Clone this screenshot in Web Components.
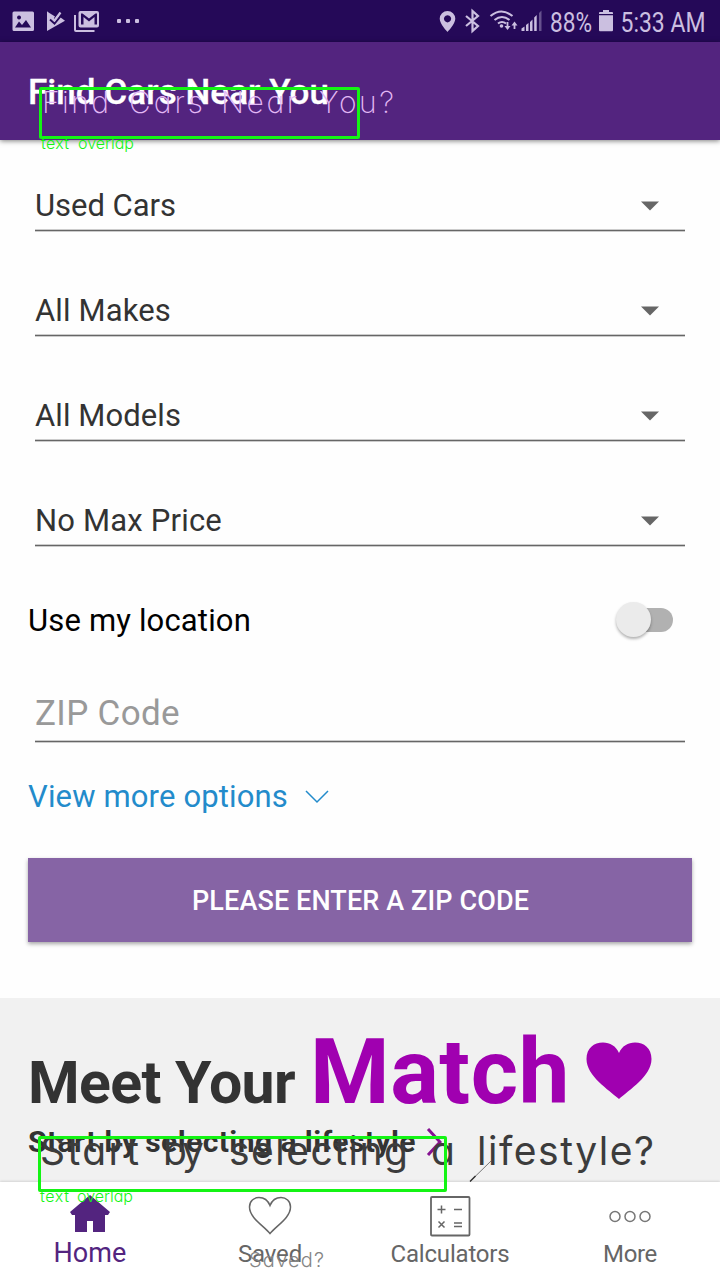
<!DOCTYPE html>
<html lang="en">
<head>
<meta charset="utf-8">
<title>Find Cars Near You</title>
<style>
html,body{margin:0;background:#fefefe}
body{font-family:Roboto,"Liberation Sans",sans-serif;width:720px;height:1280px;overflow:hidden}
</style>
</head>
<body>
<car-app></car-app>
<script>
const define = (name, html, init) => customElements.define(name, class extends HTMLElement {
  connectedCallback() {
    if (this.shadowRoot) return;
    const t = document.createElement('template');
    t.innerHTML = html;
    this.attachShadow({mode: 'open'}).append(t.content.cloneNode(true));
    if (init) init.call(this, this.shadowRoot);
  }
});

// Line of text whose tracking is adjusted to occupy a given width.
define('fit-text', `<style>:host{display:inline-block;white-space:pre;line-height:1.2}span{display:inline-block}</style><span><slot></slot></span>`, function (root) {
  const s = root.querySelector('span'), w = +this.getAttribute('w');
  const fit = () => {
    s.style.letterSpacing = '0px';
    const count = root.querySelector('slot').assignedNodes({flatten: true}).reduce((n, node) => n + node.textContent.length, 0);
    const natural = s.getBoundingClientRect().width;
    if (w && count && natural) s.style.letterSpacing = ((w - natural) / count) + 'px';
  };
  fit();
  root.querySelector('slot').addEventListener('slotchange', fit);
});

define('status-bar', `<style>
:host{display:flex;height:42px;background:#250958;color:#cbbfe0;align-items:center;justify-content:space-between}
svg{display:block}.right{display:flex;align-items:center;height:42px}
text{font-family:Roboto,sans-serif;font-size:27px}
</style>
<svg width="160" height="42" fill="#cbbfe0">
<path fill-rule="evenodd" d="M14 11.500h18.500q1.500 0 1.500 1.500v16.500q0 1.500-1.500 1.500H14q-1.500 0-1.500-1.500V13q0-1.500 1.500-1.500zM15 27.500h16l-5-7.500-4 5-3-3.500zM19 15.500a2 2 0 1 0 .1 0z"/>
<path d="M47 11.500V31L65 20.800 58 15.500z"/><path d="M47 11.500L54.500 19.500 60 11.500z" fill="#250958"/><path d="M47 11.500l8 5-2 3-6-3z"/>
<path d="M50 19.500l4.500 4L63 13" fill="none" stroke="#250958" stroke-width="2"/>
<path d="M51.500 17.500l3 3L60.500 12.500" fill="none" stroke="#cbbfe0" stroke-width="2.200"/>
<path d="M74 15h2v15h18.500v2H76q-2 0-2-2z"/>
<path fill-rule="evenodd" d="M80.500 11h16.500q2 0 2 2v12.500q0 2-2 2H80.500q-2 0-2-2V13q0-2 2-2zM81 13.500v11h2.500v-7.500l5.500 4.500 5.500-4.500v7.500H97v-11h-1.500L89 18.500l-6.500-5z"/>
<rect x="117" y="19" width="4" height="4" rx="1"/><rect x="126" y="19" width="4" height="4" rx="1"/><rect x="135" y="19" width="4" height="4" rx="1"/>
</svg>
<div class="right">
<svg width="282" height="42" viewBox="438 0 282 42" fill="#cbbfe0">
<path fill-rule="evenodd" d="M447.500 11a7.800 7.800 0 0 1 7.800 7.800C455.300 24 447.500 32 447.500 32S439.700 24 439.700 18.800A7.800 7.800 0 0 1 447.500 11zM447.500 15.200a3.600 3.600 0 1 0 .1 0z"/>
<path d="M466 16l12 10-5.500 5V11l5.500 5-12 10" fill="none" stroke="#cbbfe0" stroke-width="2.200"/>
<path d="M490.500 16q11-9 22 0M494.500 20q7.500-6 15 0M498 23.500q4-3 8 0" fill="none" stroke="#cbbfe0" stroke-width="2.100"/>
<circle cx="501.500" cy="26" r="1.800"/>
<path d="M507.500 22v5M514.500 29v-5" stroke="#cbbfe0" stroke-width="1.800"/><path d="M504.500 26h6l-3 4zM511.500 25.500h6l-3-4z"/>
<path d="M521.500 31v-2.500l3-2V31zM526 31v-6l2.500-2V31zM530 31v-9l2.500-2.500V31zM534.200 31V17.500l2.500-2.500v16z"/><path d="M539 31V13l2.500-2.500V31z" opacity=".4"/>
<text x="550" y="31.500" textLength="42" lengthAdjust="spacingAndGlyphs">88%</text>
<path d="M603 10h6v2H612q1 0 1 1v1H599v-1q0-1 1-1h3zM599 15.300h14V30q0 1.200-1 1.200H600q-1 0-1-1.200z"/>
<text x="620.500" y="31.500" textLength="85" lengthAdjust="spacingAndGlyphs">5:33 AM</text>
</svg>
</div>`);

define('title-bar', `<style>
:host{display:flex;height:98px;background:#53247f;color:#fff;box-shadow:0 1px 5px rgba(0,0,0,.5);align-items:center;padding:4px 0 0 28px;box-sizing:border-box;font-size:35px;font-weight:500;-webkit-text-stroke:.3px}
</style><fit-text w="301"><slot></slot></fit-text>`);

define('select-row', `<style>
:host{display:flex;height:105px;margin:0 35px;box-sizing:border-box;border-bottom:1px solid #666;box-shadow:0 1px #ccc,inset 0 -1px #ccc;color:#333;font-size:31px;justify-content:space-between;align-items:flex-end;padding:0 26px 6px 0}
svg{margin-bottom:13px}
</style><fit-text></fit-text><svg width="18" height="10"><path d="M0 .5h18L9 9.500z" fill="#666"/></svg>`, function (root) {
  const f = document.createElement('fit-text');
  f.setAttribute('w', this.getAttribute('w'));
  f.textContent = this.getAttribute('label');
  root.querySelector('fit-text').replaceWith(f);
});

define('toggle-row', `<style>
:host{display:flex;height:148px;box-sizing:border-box;padding:0 47px 0 28px;align-items:center;justify-content:space-between;font-size:31px;color:#000}
.track{width:46px;height:24px;border-radius:12px;background:#b1b1b1;display:flex;align-items:center}
.knob{width:35px;height:35px;border-radius:50%;background:#ebebeb;box-shadow:0 2px 3px rgba(0,0,0,.3);flex:none;margin:-1px 0 0 -11px}
fit-text{padding-top:2px}
</style><fit-text w="223"><slot></slot></fit-text><div class="track"><div class="knob"></div></div>`);

define('zip-field', `<style>
:host{display:flex;height:48px;margin:0 35px;border-bottom:1px solid #666;box-shadow:0 1px #ccc,inset 0 -1px #ccc;box-sizing:border-box;color:#999;font-size:35px;align-items:flex-start}
fit-text{margin-top:-1px}
</style><fit-text w="145"><slot></slot></fit-text>`);

define('more-link', `<style>
:host{display:flex;height:116px;box-sizing:border-box;padding:0 28px 6px;align-items:center;color:#238bcb;font-size:31px;gap:17px}
svg{margin-bottom:1px}
</style><fit-text w="260"><slot></slot></fit-text><svg width="24" height="14"><path d="M1 1l11 11L23 1" fill="none" stroke="#238bcb" stroke-width="1.500"/></svg>`);

define('cta-button', `<style>
:host{display:flex;height:84px;box-sizing:border-box;padding:2px 0 0 1px;margin:0 28px 56px;background:#8664a5;color:#fff;align-items:center;justify-content:center;font-size:27px;font-weight:500;box-shadow:0 2px 4px rgba(0,0,0,.35)}
</style><fit-text w="337"><slot></slot></fit-text>`);

define('match-promo', `<style>
:host{display:block;height:184px;background:#f1f1f1;color:#333;font-weight:700;overflow:hidden}
.line{display:flex;align-items:baseline;padding:20px 0 0 28px;font-size:59px;height:106px}
.big{font-size:91px;color:#a000b0;margin-left:15px}
.line svg{margin-left:16px;align-self:flex-start;margin-top:24px}
.sub{display:flex;align-items:center;padding-left:28px;gap:10px;font-size:30px;height:36px}
</style>
<div class="line"><fit-text w="267">Meet Your</fit-text><fit-text class="big" w="260">Match</fit-text>
<svg width="66" height="58" viewBox="0 0 66 58"><path d="M33 57C23 48 .5 34 .5 17C.5 6 8 .5 17 .5C24 .5 30 4 33 11C36 4 42 .5 49 .5C58 .5 65.500 6 65.500 17C65.500 34 43 48 33 57z" fill="#a000b0"/></svg></div>
<div class="sub"><fit-text w="388">Start by selecting a lifestyle</fit-text><svg width="16" height="28"><path d="M2 1l12 13L2 27" fill="none" stroke="#861292" stroke-width="3"/></svg></div>`);

define('nav-item', `<style>
:host{display:flex;flex:1;flex-direction:column;align-items:center;color:#666;font-size:24px}
:host([active]){color:#53247f;font-size:27px}
svg{height:56px;width:60px;flex:none;display:block}
fit-text{margin-top:2px}:host([active]) fit-text{margin-top:-1px}
</style><svg viewBox="0 0 60 56"></svg>`, function (root) {
  const icons = {
    home: '<path d="M30 13L50 30l-2 3h-3v17H33V39h-6v11H15V33h-3l-2-3z" fill="#53247f"/>',
    heart: '<path d="M30 51.500C24 44 9.500 36 9.500 25C9.500 19 14 15.500 19 15.500C24 15.500 28 18.500 30 23.500C32 18.500 36 15.500 41 15.500C46 15.500 50.500 19 50.500 25C50.500 36 36 44 30 51.500z" fill="none" stroke="#666" stroke-width="1.500"/>',
    calc: '<g fill="none" stroke="#666" stroke-width="1.800"><rect x="11" y="15" width="38.500" height="38.500" rx="1"/><path d="M17.500 27.500h8M21.500 23.500v8M34 27.500h8M18.500 39.500l6 6M24.500 39.500l-6 6M34 41h8M34 44.500h8" stroke-width="1.500"/></g>',
    dots: '<g fill="none" stroke="#777" stroke-width="1.500"><circle cx="15" cy="34.500" r="5"/><circle cx="30" cy="34.500" r="5"/><circle cx="45" cy="34.500" r="5"/></g>'
  };
  root.querySelector('svg').innerHTML = icons[this.getAttribute('icon')];
  const f = document.createElement('fit-text');
  f.setAttribute('w', this.getAttribute('w'));
  f.textContent = this.getAttribute('label');
  root.append(f);
});

define('bottom-nav', `<style>:host{display:flex;height:98px;background:#fff;box-shadow:0 -1px 2px rgba(0,0,0,.12);position:relative}</style>
<nav-item active icon="home" label="Home" w="73"></nav-item><nav-item icon="heart" label="Saved" w="64"></nav-item>
<nav-item icon="calc" label="Calculators" w="119"></nav-item><nav-item icon="dots" label="More" w="54"></nav-item>`);

// Review annotations laid over the screen: outlines, notes and thin callout lettering.
define('review-layer', `<style>
:host{position:absolute;inset:0;pointer-events:none;z-index:2}
svg{display:block}text{font-family:Inter,Lato,sans-serif;font-feature-settings:"cv11","ss03"}
</style>
<svg width="720" height="1280">
<g font-size="30" font-weight="200" fill="#e2b8f5">
<text x="42" y="112.500" textLength="67">Find</text><text x="129" y="112.500" textLength="74">Cars</text><text x="221" y="112.500" textLength="76">Near</text><text x="319" y="112.500" textLength="75">You?</text></g>
<g font-size="39" font-weight="400" fill="#3c3c3c">
<text x="40" y="1164.500" textLength="99">Start</text><text x="163" y="1164.500" textLength="41">by</text><text x="229" y="1164.500" textLength="179">selecting</text><text x="431" y="1164.500" textLength="23">a</text><text x="477" y="1164.500" textLength="177">lifestyle?</text></g>
<path d="M470 1181.500L491 1161" stroke="#777" stroke-width="1"/><path d="M470 1181.500l5.500-5.500" stroke="#333" stroke-width="1.500"/>
<text x="249" y="1267" textLength="75" font-size="20" font-weight="300" fill="#858585">Saved?</text>
<g fill="none" stroke="#14f414" stroke-width="3"><rect x="40.500" y="88.500" width="318" height="49" rx=".5"/><rect x="39.500" y="1137.500" width="406" height="53" rx=".5"/></g>
<g font-size="16" font-weight="300" fill="#14f414">
<text x="41" y="148.500" textLength="28">text</text><text x="78" y="148.500" textLength="56">overlap</text>
<text x="40" y="1201.500" textLength="29">text</text><text x="77" y="1201.500" textLength="56">overlap</text></g>
</svg>`);

define('car-app', `<style>
:host{display:flex;flex-direction:column;width:720px;height:1280px;position:relative;background:#fefefe;overflow:hidden}
status-bar,title-bar,match-promo,bottom-nav{flex:none}
.form{display:flex;flex-direction:column;flex:none;margin-top:-14px}title-bar{z-index:1}
</style>
<status-bar></status-bar><title-bar>Find Cars Near You</title-bar>
<div class="form">
<select-row label="Used Cars" w="141"></select-row><select-row label="All Makes" w="136"></select-row>
<select-row label="All Models" w="146"></select-row><select-row label="No Max Price" w="187"></select-row>
<toggle-row>Use my location</toggle-row><zip-field>ZIP Code</zip-field><more-link>View more options</more-link>
<cta-button>PLEASE ENTER A ZIP CODE</cta-button></div>
<match-promo></match-promo><bottom-nav></bottom-nav><review-layer></review-layer>`);
</script>
</body>
</html>
